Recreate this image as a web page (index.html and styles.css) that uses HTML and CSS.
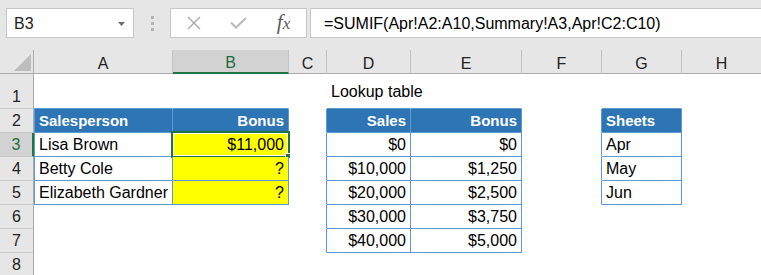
FILE: index.html
```html
<!DOCTYPE html>
<html lang="en">
<head>
<meta charset="utf-8">
<title>SUMIF across sheets</title>
<link rel="stylesheet" href="styles.css">
</head>
<body>
<div class="app">
  <div class="fbar">
    <div class="namebox">
      <span>B3</span>
      <svg class="caret" width="7" height="4" viewBox="0 0 7 4"><polygon points="0,0 7,0 3.5,4" fill="#6b6b6b"/></svg>
    </div>
    <div class="grip"><span class="dot"></span><span class="dot"></span><span class="dot"></span></div>
    <div class="fnbtns">
      <div class="slot">
        <svg width="14" height="14" viewBox="0 0 14 14"><path d="M1 1 L13 13 M13 1 L1 13" stroke="#a8a8a8" stroke-width="1.3" fill="none"/></svg>
      </div>
      <div class="slot">
        <svg width="17" height="12" viewBox="0 0 17 12"><polyline points="1,5.5 6,10.5 16,1" stroke="#b8b8b8" stroke-width="2" fill="none"/></svg>
      </div>
      <div class="slot"><span class="fx">f<span class="fx-x">x</span></span></div>
    </div>
    <div class="formula">=SUMIF(Apr!A2:A10,Summary!A3,Apr!C2:C10)</div>
  </div>

  <div class="sheet">
    <!-- column headers -->
    <div class="c corner"><svg width="17" height="17" viewBox="0 0 17 17"><polygon points="17,0 17,17 0,17" fill="#bdbdbd"/></svg></div>
    <div class="c ch">A</div>
    <div class="c ch sel">B</div>
    <div class="c ch">C</div>
    <div class="c ch">D</div>
    <div class="c ch">E</div>
    <div class="c ch">F</div>
    <div class="c ch">G</div>
    <div class="c ch">H</div>

    <!-- row 1 -->
    <div class="c rh">1</div>
    <div class="c bb"></div>
    <div class="c bb"></div>
    <div class="c"></div>
    <div class="c bb">Lookup table</div>
    <div class="c bb"></div>
    <div class="c"></div>
    <div class="c bb"></div>
    <div class="c"></div>

    <!-- row 2 -->
    <div class="c rh">2</div>
    <div class="c bd bl hd">Salesperson</div>
    <div class="c bd hd r">Bonus</div>
    <div class="c br"></div>
    <div class="c bd hd r">Sales</div>
    <div class="c bd hd r">Bonus</div>
    <div class="c br"></div>
    <div class="c bd hd">Sheets</div>
    <div class="c"></div>

    <!-- row 3 -->
    <div class="c rh sel">3</div>
    <div class="c bd bl">Lisa Brown</div>
    <div class="c bd y r active">$11,000<span class="selbox"><span class="handle"></span></span></div>
    <div class="c br"></div>
    <div class="c bd r">$0</div>
    <div class="c bd r">$0</div>
    <div class="c br"></div>
    <div class="c bd">Apr</div>
    <div class="c"></div>

    <!-- row 4 -->
    <div class="c rh">4</div>
    <div class="c bd bl">Betty Cole</div>
    <div class="c bd y r">?</div>
    <div class="c br"></div>
    <div class="c bd r">$10,000</div>
    <div class="c bd r">$1,250</div>
    <div class="c br"></div>
    <div class="c bd">May</div>
    <div class="c"></div>

    <!-- row 5 -->
    <div class="c rh">5</div>
    <div class="c bd bl">Elizabeth Gardner</div>
    <div class="c bd y r">?</div>
    <div class="c br"></div>
    <div class="c bd r">$20,000</div>
    <div class="c bd r">$2,500</div>
    <div class="c br"></div>
    <div class="c bd">Jun</div>
    <div class="c"></div>

    <!-- row 6 -->
    <div class="c rh">6</div>
    <div class="c"></div>
    <div class="c"></div>
    <div class="c br"></div>
    <div class="c bd r">$30,000</div>
    <div class="c bd r">$3,750</div>
    <div class="c"></div>
    <div class="c"></div>
    <div class="c"></div>

    <!-- row 7 -->
    <div class="c rh">7</div>
    <div class="c"></div>
    <div class="c"></div>
    <div class="c br"></div>
    <div class="c bd r">$40,000</div>
    <div class="c bd r">$5,000</div>
    <div class="c"></div>
    <div class="c"></div>
    <div class="c"></div>

    <!-- row 8 -->
    <div class="c rh">8</div>
    <div class="c"></div>
    <div class="c"></div>
    <div class="c"></div>
    <div class="c"></div>
    <div class="c"></div>
    <div class="c"></div>
    <div class="c"></div>
    <div class="c"></div>
  </div>
</div>
</body>
</html>
```

FILE: styles.css
```css
* { box-sizing: border-box; }

html, body {
  margin: 0;
  background: #ffffff;
}

body {
  font-family: "Liberation Sans", Arial, sans-serif;
  color: #000;
  overflow: hidden;
}

.app {
  width: 761px;
  height: 275px;
  overflow: hidden;
}

/* ---------- formula bar ---------- */
.fbar {
  height: 50px;
  background: #e6e6e6;
  display: flex;
  align-items: flex-start;
  padding: 8px 0 0 6px;
}

.namebox {
  width: 128px;
  height: 30px;
  flex: none;
  background: #fff;
  border: 1px solid #c6c6c6;
  display: flex;
  align-items: center;
  justify-content: space-between;
  padding: 1px 8px 0 7px;
  font-size: 16px;
  line-height: 20px;
  color: #222;
}

.caret { display: block; }

.grip {
  width: 36px;
  height: 30px;
  flex: none;
  display: flex;
  flex-direction: column;
  align-items: center;
  justify-content: center;
  gap: 3px;
}

.dot {
  width: 3px;
  height: 3px;
  background: #b3b3b3;
}

.fnbtns {
  width: 137px;
  height: 30px;
  flex: none;
  background: #fff;
  border: 1px solid #c6c6c6;
  display: flex;
  align-items: center;
}

.slot {
  width: 45px;
  height: 28px;
  display: flex;
  align-items: center;
  justify-content: center;
}

.slot svg { display: block; }

.fx {
  font-family: "Liberation Serif", "Times New Roman", serif;
  font-style: italic;
  font-size: 21px;
  line-height: 20px;
  color: #5a5a5a;
}

.fx-x { font-size: 17px; }

.formula {
  flex: 1;
  height: 30px;
  margin-left: 3px;
  background: #fff;
  border: 1px solid #c6c6c6;
  border-right: none;
  padding: 1px 0 0 13px;
  display: flex;
  align-items: center;
  font-size: 16px;
  line-height: 20px;
  color: #000;
  white-space: nowrap;
}

/* ---------- sheet ---------- */
.sheet {
  display: grid;
  grid-template-columns: 34px 139px 116px 38px 84px 111px 80px 80px 80px;
  grid-template-rows: 24px 35px repeat(7, 24px);
}

.c {
  position: relative;
  border-right: 1px solid transparent;
  border-bottom: 1px solid transparent;
  padding: 0 4px;
  display: flex;
  align-items: center;
  font-size: 16px;
  line-height: 23px;
  white-space: nowrap;
  min-width: 0;
}

.corner {
  background: #e6e6e6;
  border-right: 1px solid #ababab;
  border-bottom: 1px solid #ababab;
  justify-content: flex-end;
  align-items: flex-end;
  padding: 0 2px 2px 0;
}

.corner svg { display: block; }

.ch {
  background: #e6e6e6;
  border-right: 1px solid #c3c3c3;
  border-bottom: 1px solid #ababab;
  justify-content: center;
  padding-top: 3px;
  color: #222;
}

.ch.sel {
  background: #d2d2d2;
  border-bottom: 2px solid #217346;
  color: #1e6b41;
}

.rh {
  background: #e6e6e6;
  border-right: 1px solid #ababab;
  border-bottom: 1px solid #c6c6c6;
  justify-content: center;
  align-items: flex-end;
  padding: 0;
  color: #222;
}

.rh.sel {
  background: #d2d2d2;
  border-right: 2px solid #217346;
  color: #1e6b41;
}

/* table borders */
.bd {
  border-right-color: #5b9bd5;
  border-bottom-color: #5b9bd5;
}

.bl { border-left: 1px solid #5b9bd5; }
.bb { border-bottom-color: #5b9bd5; }
.br { border-right-color: #5b9bd5; }

.hd {
  background: #2e75b6;
  color: #fff;
  font-weight: bold;
  font-size: 15px;
}

.r { justify-content: flex-end; }

.y { background: #ffff00; }

/* active cell selection (overlay) */
.selbox {
  position: absolute;
  left: -2px;
  top: -2px;
  right: -2px;
  bottom: -2px;
  border: 2px solid #217346;
  box-shadow: inset 0 0 0 1px #ffffff;
  pointer-events: none;
}

.handle {
  position: absolute;
  right: -3px;
  bottom: -3px;
  width: 6px;
  height: 6px;
  background: #217346;
  border: 1px solid #ffffff;
}
```
